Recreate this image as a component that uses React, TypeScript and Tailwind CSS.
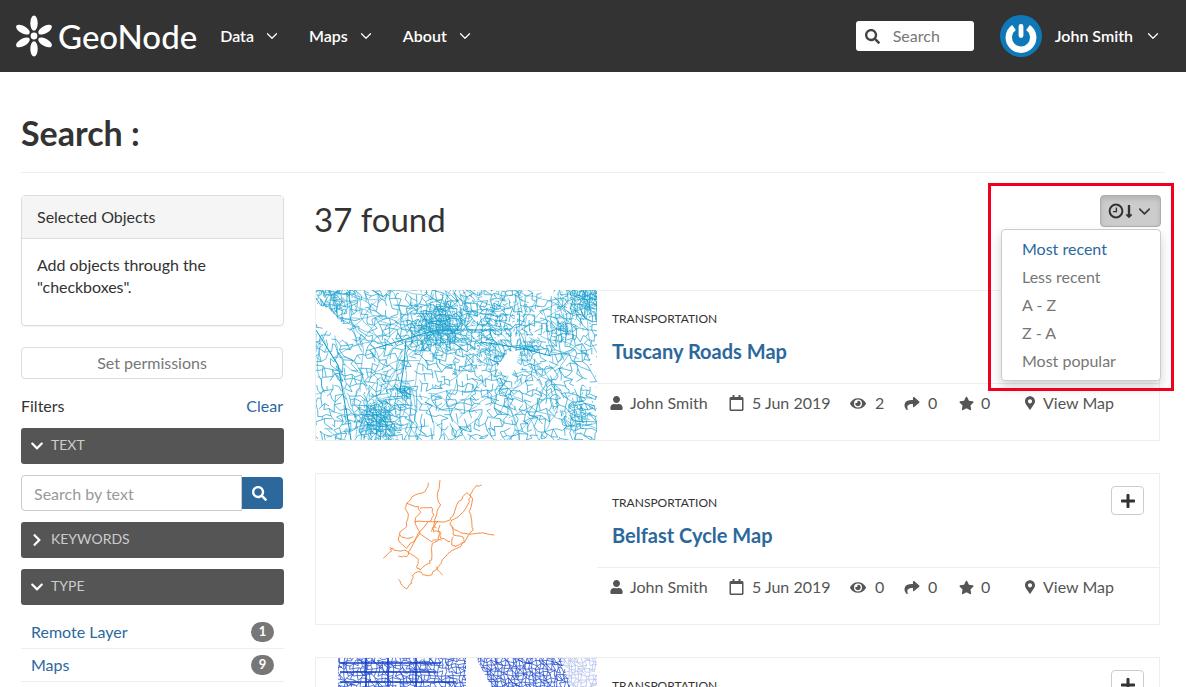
import { useMemo } from "react"
import { ChevronDown } from "lucide-react"
import {
  FaChevronDown,
  FaChevronRight,
  FaEye,
  FaLongArrowAltDown,
  FaMapMarkerAlt,
  FaPlus,
  FaRegCalendar,
  FaSearch,
  FaShare,
  FaStar,
  FaUser,
} from "react-icons/fa"

function makeRandom(seed: number) {
  let s = seed
  return () => {
    s = (s * 16807) % 2147483647
    return (s - 1) / 2147483646
  }
}

// builds a jittered road mesh, denser near the given hubs [x, y, radius, weight]
function roadMesh(seed: number, w: number, h: number, step: number, base: number, hubs: number[][]) {
  const r = makeRandom(seed)
  const cols = Math.ceil(w / step) + 1
  const rows = Math.ceil(h / step) + 1
  const pts: [number, number][][] = []
  for (let y = 0; y < rows; y++) {
    const row: [number, number][] = []
    for (let x = 0; x < cols; x++) {
      row.push([x * step + (r() - 0.5) * step * 0.9, y * step + (r() - 0.5) * step * 0.9])
    }
    pts.push(row)
  }
  const density = (x: number, y: number) => {
    let d = base
    for (const [hx, hy, rad, weight] of hubs) {
      const q = ((x - hx) ** 2 + (y - hy) ** 2) / (rad * rad)
      d += weight * Math.exp(-q)
    }
    return d
  }
  let out = ""
  for (let y = 0; y < rows; y++) {
    for (let x = 0; x < cols; x++) {
      const [px, py] = pts[y][x]
      const next = [
        x + 1 < cols ? pts[y][x + 1] : null,
        y + 1 < rows ? pts[y + 1][x] : null,
        x + 1 < cols && y + 1 < rows ? pts[y + 1][x + 1] : null,
      ]
      next.forEach((p, i) => {
        if (!p) return
        const chance = density(px, py) * (i === 2 ? 0.3 : 1)
        if (r() < chance) out += `M${px.toFixed(1)} ${py.toFixed(1)}L${p[0].toFixed(1)} ${p[1].toFixed(1)}`
      })
    }
  }
  return out
}

// long roads that run between the towns
function longRoads(seed: number, count: number, w: number, h: number) {
  const r = makeRandom(seed)
  let out = ""
  for (let i = 0; i < count; i++) {
    let x = r() * w
    let y = r() * h
    let a = r() * Math.PI * 2
    out += `M${x.toFixed(1)} ${y.toFixed(1)}`
    for (let s = 0; s < 8; s++) {
      a += (r() - 0.5) * 0.8
      x += Math.cos(a) * 7
      y += Math.sin(a) * 7
      out += `L${x.toFixed(1)} ${y.toFixed(1)}`
    }
  }
  return out
}

const tuscanyHubs = [
  [120, 35, 18, 1.4],
  [62, 130, 15, 1.5],
  [270, 6, 16, 1],
  [245, 38, 10, 0.8],
  [212, 58, 7, 0.8],
  [20, 8, 14, 0.6],
  [262, 122, 12, 0.7],
  [85, 100, 8, 0.8],
  [170, 30, 40, 0.25],
]

function TuscanyThumb() {
  const mesh = useMemo(() => roadMesh(4211, 281, 150, 5, 0.5, tuscanyHubs), [])
  const towns = useMemo(() => roadMesh(733, 281, 150, 2.4, 0, tuscanyHubs), [])
  const roads = useMemo(() => longRoads(61, 120, 281, 150), [])
  return (
    <svg viewBox="0 0 281 150" className="-mt-[1px] block h-[150px] w-[281px] shrink-0">
      <path d={mesh} fill="none" stroke="#0f9bcb" strokeWidth="0.8" strokeOpacity="0.85" />
      <path d={roads} fill="none" stroke="#0f9bcb" strokeWidth="0.7" strokeOpacity="0.7" />
      <path d={towns} fill="none" stroke="#0f9bcb" strokeWidth="0.7" strokeOpacity="0.85" />
      <path d="M0 14L12 18L40 48L30 52L0 34Z" fill="#fff" />
      <path d="M192 62L205 60L195 88L180 78Z" fill="#fff" />
      <path d="M225 0L238 0L236 6L226 8Z" fill="#fff" />
      <path d="M272 62L281 68L281 90Z" fill="#fff" />
      <path
        d="M90 50L88 75L84 100M165 52L205 58L235 66M0 40L22 75L30 120M30 118L35 150M60 58L120 40L180 40"
        fill="none"
        stroke="#0f9bcb"
        strokeWidth="1"
      />
    </svg>
  )
}

const belfastLines = [
  "M220 265L245 243L240 233L250 240L285 240L325 268L320 290L330 300L355 280L365 270L367 220L385 210L395 210",
  "M265 328L275 345L290 357L305 340L308 315L325 305L345 315L365 315L385 290L405 262L440 235L465 215L490 180L485 150L478 125L488 85L470 68L445 95L432 130L420 150L385 155L372 170",
  "M515 45L495 52L480 75L478 95L450 135L425 150L420 165L435 180L465 190L500 190L553 195",
  "M390 30L382 70L392 105L380 135L372 165L365 185",
  "M355 38L345 65L315 75L290 100L285 115L295 135L290 170L270 185L265 210L290 235L320 200L335 180L355 155",
  "M290 100L325 110L330 130L315 155L325 180L335 195L365 215L385 205L390 165",
  "M330 115L365 112L372 135L358 155",
  "M430 200L425 225L435 230L465 215L458 200L430 195L425 170",
  "M380 290L398 315",
  "M265 258L290 260L300 240L330 190",
  "M270 195L290 205L310 200",
  "M380 175L368 172L370 185L390 185L392 205L420 215",
  "M313 155L358 155L385 155",
]

// adds small bends so the traced lines look like streets
function wiggle(line: string, r: () => number) {
  const nums = line.slice(1).split("L").map((p) => p.split(" ").map(Number))
  let d = `M${nums[0][0]} ${nums[0][1]}`
  for (let i = 1; i < nums.length; i++) {
    const [ax, ay] = nums[i - 1]
    const [bx, by] = nums[i]
    for (let t = 1; t <= 3; t++) {
      const k = t / 3
      const jx = t === 3 ? 0 : (r() - 0.5) * 7
      const jy = t === 3 ? 0 : (r() - 0.5) * 7
      d += `L${(ax + (bx - ax) * k + jx).toFixed(1)} ${(ay + (by - ay) * k + jy).toFixed(1)}`
    }
  }
  return d
}

function BelfastThumb() {
  const lines = useMemo(() => {
    const r = makeRandom(83)
    return belfastLines.map((l) => wiggle(l, r))
  }, [])
  return (
    <svg viewBox="18 12 843 453" className="block h-[151px] w-[281px] shrink-0">
      <g fill="none" stroke="#f5873a" strokeWidth="2.8" strokeLinejoin="round">
        {lines.map((d) => (
          <path key={d} d={d} />
        ))}
      </g>
    </svg>
  )
}

function BlueThumb() {
  const mesh = useMemo(() => roadMesh(977, 281, 30, 3.5, 0.8, [[190, 12, 35, 0.5]]), [])
  return (
    <svg viewBox="0 0 281 30" className="block h-[30px] w-[281px] shrink-0">
      <path d={mesh} fill="none" stroke="#1440c8" strokeWidth="0.7" />
      <path d="M0 0H22V30H0Z" fill="#fff" />
      <path d="M150 0L160 0L176 30L150 30Z" fill="#fff" />
      <path d="M245 0H281V30H255Z" fill="#fff" fillOpacity="0.65" />
      <path d="M24 5H125M24 14H120M72 0V30M100 0V30M50 0V30M24 24H140" fill="none" stroke="#1440c8" strokeWidth="1.5" />
    </svg>
  )
}

function Logo() {
  const petals = [0, 60, 120, 180, 240, 300]
  return (
    <svg viewBox="0 0 40 42" className="h-[42px] w-[40px] shrink-0">
      <circle cx="20" cy="21" r="3.4" fill="#fff" />
      {petals.map((a) => (
        <ellipse key={a} cx="20" cy="8.2" rx="3.7" ry="7.6" fill="#fff" transform={`rotate(${a} 20 21)`} />
      ))}
    </svg>
  )
}

function Avatar() {
  return (
    <svg viewBox="0 0 42 42" className="h-[42px] w-[42px] shrink-0">
      <circle cx="21" cy="21" r="21" fill="#0f78b8" />
      <path d="M14 12.5A12.2 12.2 0 1 0 28 12.5" fill="none" stroke="#fff" strokeWidth="6.4" />
      <rect x="18.6" y="9" width="4.8" height="14" rx="2.4" fill="#fff" />
    </svg>
  )
}

function SortClock() {
  return (
    <svg viewBox="0 0 16 16" className="h-[16px] w-[16px] shrink-0">
      <circle cx="8" cy="8" r="6.4" fill="none" stroke="currentColor" strokeWidth="2" />
      <path d="M8.4 4.4V8.6H5" fill="none" stroke="currentColor" strokeWidth="1.4" />
    </svg>
  )
}

function NavItem({ label }: { label: string }) {
  return (
    <div className="flex items-center gap-[9px] text-white">
      <span className="font-semibold">{label}</span>
      <ChevronDown className="h-[18px] w-[18px]" strokeWidth={1.6} />
    </div>
  )
}

function Navbar() {
  return (
    <nav className="flex h-[72px] shrink-0 items-center bg-[#333] pl-[14px] pr-[24px]">
      <Logo />
      <span className="ml-[4px] text-[33px] leading-none font-medium text-white">GeoNode</span>
      <div className="ml-[23px] flex gap-[28px]">
        <NavItem label="Data" />
        <NavItem label="Maps" />
        <NavItem label="About" />
      </div>
      <div className="ml-auto flex h-[30px] w-[118px] items-center rounded-[3px] bg-white pl-[9px] text-[#777]">
        <FaSearch className="h-[15px] w-[15px] text-[#444]" />
        <span className="ml-[13px]">Search</span>
      </div>
      <div className="ml-[26px] flex items-center text-white">
        <Avatar />
        <span className="ml-[13px] font-semibold">John Smith</span>
        <ChevronDown className="ml-[11px] h-[18px] w-[18px]" strokeWidth={1.6} />
      </div>
    </nav>
  )
}

function FilterBar({ label, open }: { label: string; open: boolean }) {
  return (
    <div className="flex h-[36px] items-center rounded-[3px] bg-[#555] pl-[9px] text-sm text-[#ccc]">
      <span className="flex w-[21px] text-white">
        {open ? <FaChevronDown className="h-[14px] w-[14px]" /> : <FaChevronRight className="h-[14px] w-[14px]" />}
      </span>
      <span className="pb-[2px]">{label}</span>
    </div>
  )
}

function TypeRow({ label, count }: { label: string; count: number }) {
  return (
    <div className="flex h-[33px] items-center justify-between border-b border-[#eee] pl-[10px] pr-[10px] text-[#2c689c]">
      {label}
      <span className="flex h-[20px] w-[23px] items-center justify-center rounded-full bg-[#777] text-[13px] font-bold text-white">
        {count}
      </span>
    </div>
  )
}

function Sidebar() {
  return (
    <aside className="w-[263px] shrink-0">
      <div className="h-[131px] rounded-[4px] border border-[#ddd] shadow-[0_1px_1px_rgba(0,0,0,0.05)]">
        <div className="flex h-[43px] items-center border-b border-[#ddd] bg-[#f5f5f5] px-[15px] text-[#333]">
          Selected Objects
        </div>
        <p className="px-[15px] pt-[15px] leading-[22px] tracking-[-0.05px] text-[#333]">
          Add objects through the "checkboxes".
        </p>
      </div>
      <div className="mt-[21px] flex h-[32px] w-[262px] items-center justify-center rounded-[4px] border border-[#ddd] text-[#777]">
        Set permissions
      </div>
      <div className="mt-[16px] flex h-[22px] w-[262px] items-center justify-between">
        <span className="text-[#333]">Filters</span>
        <span className="text-[#2c689c]">Clear</span>
      </div>
      <div className="mt-[11px] space-y-[11px]">
        <FilterBar label="TEXT" open />
        <div className="flex h-[36px] w-[262px] items-center">
          <div className="flex h-[36px] w-[221px] items-center rounded-l-[4px] border border-[#ccc] pl-[12px] pt-[1px] text-[#999]">
            Search by text
          </div>
          <div className="flex h-[32px] w-[41px] items-center rounded-r-[4px] bg-[#2c689c] pl-[10px] text-white">
            <FaSearch className="h-[15px] w-[15px]" />
          </div>
        </div>
        <FilterBar label="KEYWORDS" open={false} />
        <FilterBar label="TYPE" open />
      </div>
      <div className="mt-[11px]">
        <TypeRow label="Remote Layer" count={1} />
        <TypeRow label="Maps" count={9} />
      </div>
    </aside>
  )
}

function Meta({ views }: { views: number }) {
  return (
    <div className="flex h-[40px] items-center pb-[2px] pl-[13px] text-[#555]">
      <FaUser className="h-[14px] w-[13px]" />
      <span className="ml-[7px] w-[99px]">John Smith</span>
      <FaRegCalendar className="h-[16px] w-[15px]" />
      <span className="ml-[8px] w-[98px]">5 Jun 2019</span>
      <FaEye className="h-[15px] w-[16px]" />
      <span className="ml-[9px] w-[29px]">{views}</span>
      <FaShare className="h-[15px] w-[16px]" />
      <span className="ml-[8px] w-[31px]">0</span>
      <FaStar className="h-[15px] w-[15px]" />
      <span className="ml-[7px] w-[44px]">0</span>
      <FaMapMarkerAlt className="h-[14px] w-[10px]" />
      <span className="ml-[8px]">View Map</span>
    </div>
  )
}

function MapCard({ title, views, thumb, tall }: { title: string; views: number; thumb: React.ReactNode; tall?: boolean }) {
  return (
    <article className={`flex w-[845px] border border-[#eee] ${tall ? "h-[152px]" : "h-[151px]"}`}>
      {thumb}
      <div className="flex min-w-0 flex-1 flex-col">
        <div
          className={`flex justify-between border-b border-[#eee] pl-[15px] pr-[15px] pt-[12px] ${tall ? "h-[94px]" : "h-[93px]"}`}
        >
          <div className={tall ? "mt-[8px]" : "mt-[7px]"}>
            <div className="text-xs leading-[18px] text-[#333]">TRANSPORTATION</div>
            <h3 className="mt-[10px] text-[20px] leading-[26px] font-bold text-[#2c689c]">{title}</h3>
          </div>
          <div className="flex h-[29px] w-[33px] items-center justify-center rounded-[4px] border border-[#ccc] text-[#333]">
            <FaPlus className="h-[16px] w-[16px]" />
          </div>
        </div>
        <Meta views={views} />
      </div>
    </article>
  )
}

function SortMenu() {
  const options = ["Less recent", "A - Z", "Z - A", "Most popular"]
  return (
    <div className="relative h-[32px] w-[61px]">
      <div className="flex h-[32px] w-[61px] items-center justify-center rounded-[4px] border border-[#adadad] bg-[#ccc] text-[#333] shadow-[inset_0_3px_5px_rgba(0,0,0,0.125)]">
        <SortClock />
        <FaLongArrowAltDown className="h-[15px] w-[10px]" />
        <ChevronDown className="ml-[1px] h-[19px] w-[19px]" strokeWidth={2} />
      </div>
      <div className="absolute right-0 top-[34px] z-10 flex h-[152px] w-[160px] flex-col rounded-[4px] border border-[#ccc] bg-white pt-[5px] pl-[20px] shadow-[0_6px_12px_rgba(0,0,0,0.175)]">
        <span className="h-[28px] leading-[28px] text-[#2c689c]">Most recent</span>
        {options.map((o) => (
          <span key={o} className="h-[28px] leading-[28px] text-[#777]">
            {o}
          </span>
        ))}
      </div>
      <div className="absolute -top-[12px] -left-[112px] z-20 h-[208px] w-[186px] border-[3px] border-[#f0001c]" />
    </div>
  )
}

function Results() {
  return (
    <main className="ml-[31px] min-w-0 flex-1">
      <div className="flex h-[95px] items-start justify-between">
        <h2 className="ml-[-1px] text-[33px] leading-[49px] text-[#333]">37 found</h2>
        <SortMenu />
      </div>
      <div className="space-y-[32px]">
        <MapCard title="Tuscany Roads Map" views={2} thumb={<TuscanyThumb />} />
        <MapCard title="Belfast Cycle Map" views={0} thumb={<BelfastThumb />} tall />
        <MapCard title="" views={0} thumb={<BlueThumb />} />
      </div>
    </main>
  )
}

export default function App() {
  return (
    <div className="flex h-screen flex-col overflow-hidden bg-white font-[Lato,sans-serif] text-base text-[#333]">
      <Navbar />
      <div className="px-[21px]">
        <div className="flex h-[101px] items-start border-b border-[#eee] pt-[37px]">
          <h1 className="text-[34px] leading-[48px] font-bold text-[#333]">Search :</h1>
        </div>
        <div className="mt-[22px] flex w-[1140px]">
          <Sidebar />
          <Results />
        </div>
      </div>
    </div>
  )
}
